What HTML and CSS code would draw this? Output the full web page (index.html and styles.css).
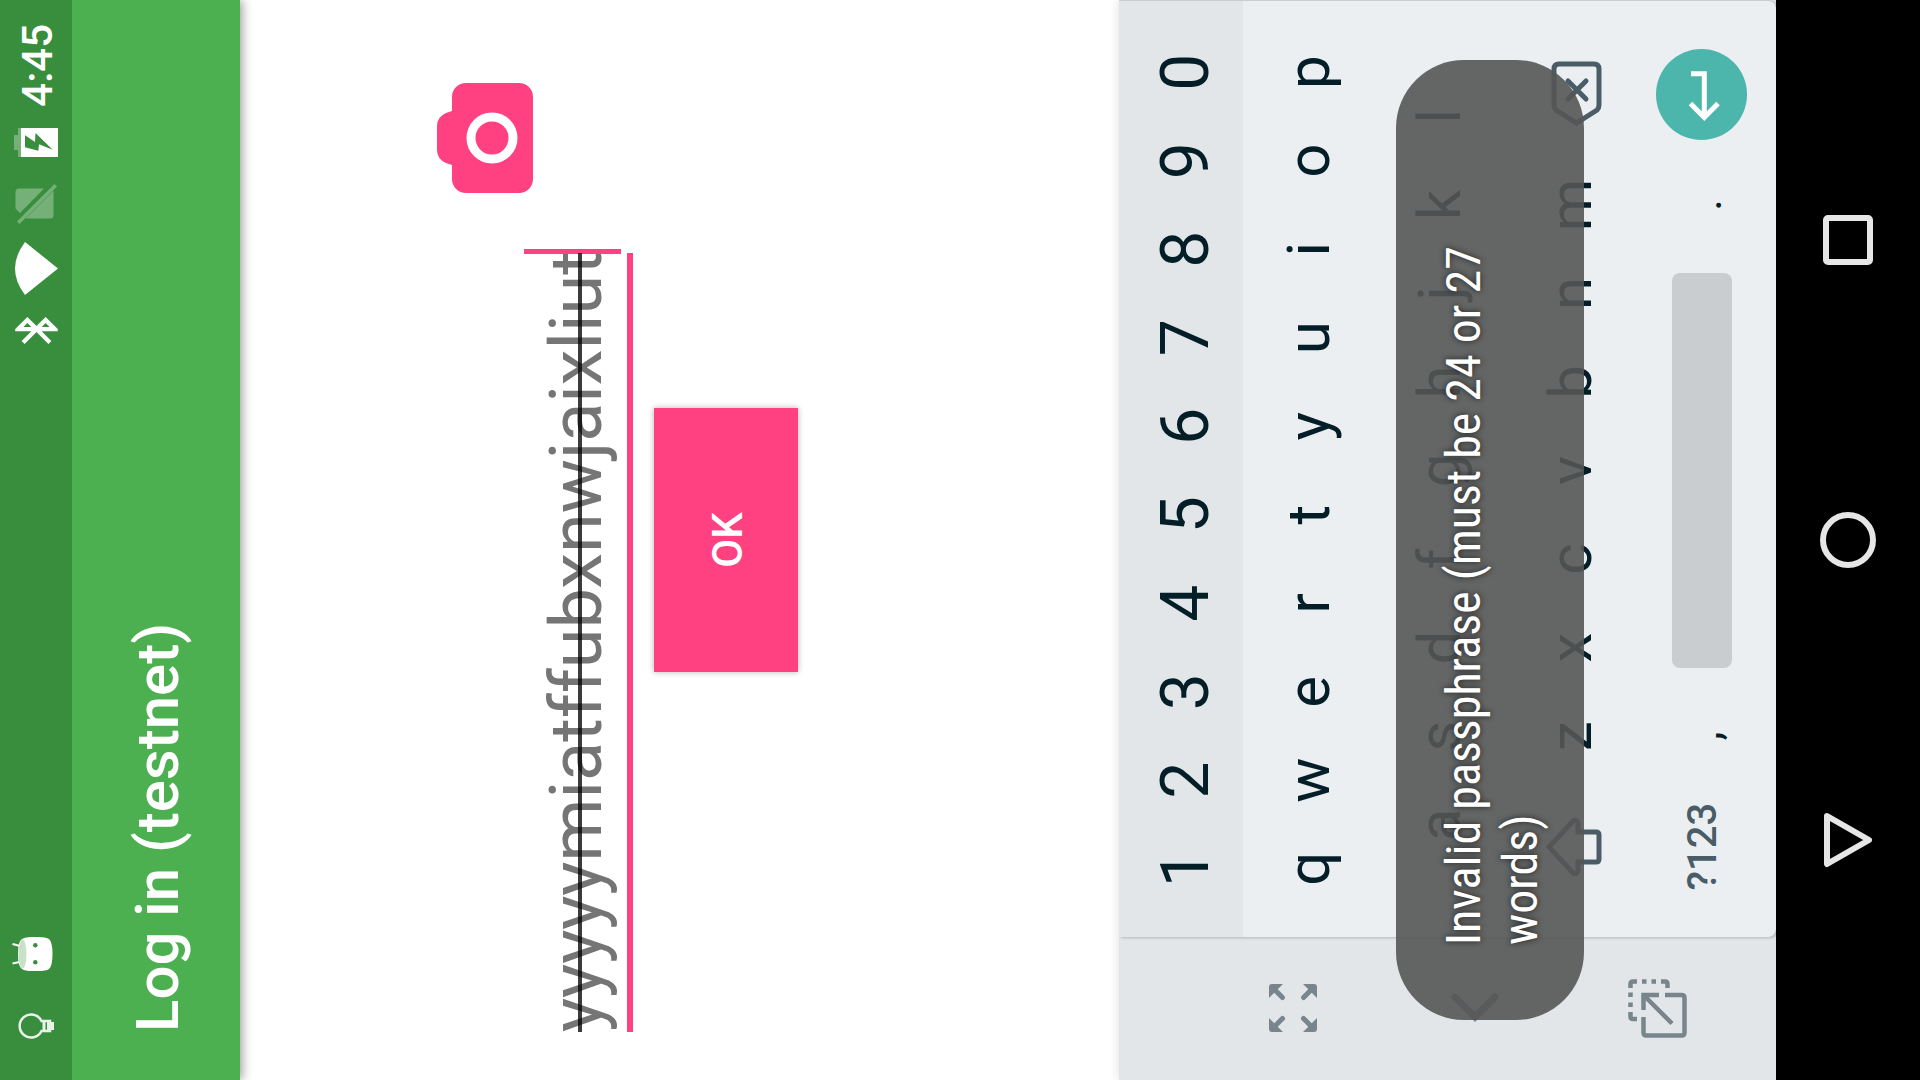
FILE: index.html
```html
<!DOCTYPE html>
<html lang="en">
<head>
<meta charset="utf-8">
<title>Log in (testnet)</title>
<link rel="stylesheet" href="styles.css">
</head>
<body>
<div class="device">
  <header class="status">
    <div class="status-group">
      <svg class="bulb" width="26" height="37" viewBox="0 0 26 37"><path d="M8 24.500A11.500 11.500 0 1 1 18 24.500V33H8Z" fill="none" stroke="#e9f3ea" stroke-width="2.500"/><path d="M7 27h12M7 31.500h12M9 35.500h8" stroke="#e9f3ea" stroke-width="3"/></svg>
      <svg class="droid" width="34" height="41" viewBox="0 0 34 41"><path d="M7.500 0.500 9.500 10M27 0.500 24.500 10" stroke="#fff" stroke-width="2.200"/><path d="M0 20Q0 13 2 10Q4 6 17 6T32 10Q34 13 34 20V26Q34 34 32 37Q29 40.500 17 40.500T2 37Q0 34 0 26Z" fill="#fff"/><ellipse cx="17" cy="10.500" rx="14.500" ry="4" fill="#c9e0ca"/><circle cx="8.700" cy="23.300" r="2.200" fill="#388e3c"/><circle cx="25.700" cy="23.300" r="2.200" fill="#388e3c"/></svg>
    </div>
    <div class="status-group">
      <svg class="bluetooth" width="27" height="43" viewBox="5 2 12.700 20"><path fill="#fff" d="M17.710 7.710L12 2h-1v7.590L6.410 5 5 6.410 10.590 12 5 17.590 6.410 19 11 14.410V22h1l5.710-5.710-4.300-4.290 4.300-4.290zM13 5.830l1.880 1.880L13 9.590V5.830zm1.880 10.460L13 18.170v-3.760l1.880 1.880z"/></svg>
      <svg class="wifi" width="53" height="43" viewBox="0 0 53 43"><path fill="#fff" d="M0 10Q26.500-10 53 10L26.500 43Z"/></svg>
      <svg class="sim" width="40" height="42" viewBox="0 0 40 42"><g fill="#76b079"><path d="M35.500 29V4Q35.500 0.500 32 0.500H15.500L11 5ZM33.500 38.500H9Q5.500 38.500 5.500 35V10.500Z"/><path d="M2.500 2 40 39.500 37.500 42 0 4.500Z"/></g></svg>
      <svg class="battery" width="29" height="44" viewBox="0 0 29 44"><path fill="#76b079" d="M7 0h15v4h7v4H0V4h7z"/><path fill="#fff" fill-rule="evenodd" d="M0 7h29v37H0ZM21.700 11 15 21 24 21.500 7.300 38.700 12.700 25 6.300 24.300 9.700 11Z"/></svg>
      <time class="clock">4:45</time>
    </div>
  </header>

  <div class="appbar"><h1>Log in (testnet)</h1></div>

  <main class="content">
    <div class="entry">
      <div class="field">
        <input type="text" aria-label="Passphrase" value="yyyyymiatffubxnwjaixliut">
        <span class="caret"></span>
      </div>
      <button class="camera" aria-label="Scan code">
        <svg width="110" height="96" viewBox="0 0 110 96"><path fill="#ff4081" d="M14 15H28L30 9Q34 0 43 0H67Q76 0 80 9L82 15H96A14 14 0 0 1 110 29V82A14 14 0 0 1 96 96H14A14 14 0 0 1 0 82V29A14 14 0 0 1 14 15Z"/><circle cx="55" cy="55" r="21" fill="none" stroke="#fff" stroke-width="9"/></svg>
      </button>
    </div>
    <button class="ok">OK</button>
  </main>

  <section class="keyboard">
    <aside class="side">
      <button aria-label="Expand keyboard"><svg width="48" height="48" viewBox="0 0 48 48"><g id="corner"><path d="M0 14V3Q0 0 3 0H14Z" fill="#78858c"/><path d="M5 5 13.500 13.500" stroke="#78858c" stroke-width="5" stroke-linecap="round"/></g><use href="#corner" transform="rotate(90 24 24)"/><use href="#corner" transform="rotate(180 24 24)"/><use href="#corner" transform="rotate(270 24 24)"/></svg></button>
      <button aria-label="Move keyboard left"><svg width="30" height="48" viewBox="0 0 30 48"><path d="M26 4 6 24 26 44" fill="none" stroke="#78858c" stroke-width="7" stroke-linecap="round"/></svg></button>
      <button aria-label="Float keyboard"><svg width="59" height="59" viewBox="0 0 59 59"><g fill="none" stroke="#78858c" stroke-width="4.500"><path d="M43 37V53.500Q43 56.500 40 56.500H5.500Q2.500 56.500 2.500 53.500V18.500Q2.500 15.500 5.500 15.500H21M28 15.500H43V31M43 15.500 14.500 44"/><path d="M19 9V5Q19 2.500 21.500 2.500H26M31 2.500h4.500M41 2.500h4.500M50 2.500H54Q56.500 2.500 56.500 5V9M56.500 14v4.500M56.500 23.500V28M56.500 33V37Q56.500 39.500 54 39.500H50"/></g></svg></button>
    </aside>
    <div class="keys">
      <div class="row digits"><button>1</button><button>2</button><button>3</button><button>4</button><button>5</button><button>6</button><button>7</button><button>8</button><button>9</button><button>0</button></div>
      <div class="row"><button>q</button><button>w</button><button>e</button><button>r</button><button>t</button><button>y</button><button>u</button><button>i</button><button>o</button><button>p</button></div>
      <div class="row inset"><button>a</button><button>s</button><button>d</button><button>f</button><button>g</button><button>h</button><button>j</button><button>k</button><button>l</button></div>
      <div class="row">
        <button class="wide" aria-label="Shift"><svg width="60" height="64" viewBox="0 0 60 64"><path d="M30 10 56 34Q58 38 54 39H45V57Q45 60 42 60H18Q15 60 15 57V39H6Q2 38 4 34Z" fill="none" stroke="#4a5d67" stroke-width="5"/></svg></button>
        <button>z</button><button>x</button><button>c</button><button>v</button><button>b</button><button>n</button><button>m</button>
        <button class="wide" aria-label="Delete"><svg width="66" height="64" viewBox="0 0 66 64"><path d="M22 15H58Q63 15 63 20V55Q63 60 58 60H22Q19 60 17 58L4 37.500 17 17Q19 15 22 15ZM28 29 46 47M46 29 28 47" fill="none" stroke="#4a5d67" stroke-width="5" stroke-linecap="round"/></svg></button>
      </div>
      <div class="row">
        <button class="wide symbols">?123</button>
        <button class="mark">,</button>
        <button class="space" aria-label="Space"><span></span></button>
        <button class="mark">.</button>
        <button class="wide" aria-label="Enter"><svg width="91" height="91" viewBox="0 0 91 91"><circle cx="45.500" cy="45.500" r="45.500" fill="#4db6ac"/><path d="M66.300 35V48.300H22M36.500 34.500 22.500 48.300 36.500 62" fill="none" stroke="#fff" stroke-width="5"/></svg></button>
      </div>
    </div>
  </section>

  <nav class="navbar">
    <button aria-label="Back"><svg width="56" height="56" viewBox="0 0 56 56"><path d="M4 7H52L28 49Z" fill="none" stroke="#e6e6e6" stroke-width="6" stroke-linejoin="round"/></svg></button>
    <button aria-label="Home"><svg width="56" height="56" viewBox="0 0 56 56"><circle cx="28" cy="28" r="25" fill="none" stroke="#e6e6e6" stroke-width="6"/></svg></button>
    <button aria-label="Recents"><svg width="56" height="56" viewBox="0 0 56 56"><rect x="6" y="6" width="44" height="44" rx="2" fill="none" stroke="#e6e6e6" stroke-width="6"/></svg></button>
  </nav>

  <div class="toast" role="alert">Invalid passphrase (must be 24 or 27 words)</div>
</div>
</body>
</html>
```
FILE: styles.css
```css
* { box-sizing: border-box; }

html { overflow: hidden; }

body {
  margin: 0;
  height: 100vh;
  overflow: hidden;
  background: #fff;
  font-family: Roboto, "Noto Sans", sans-serif;
}

button {
  display: flex;
  align-items: center;
  justify-content: center;
  margin: 0;
  padding: 0;
  border: 0;
  background: none;
  color: inherit;
  font: inherit;
}

svg { display: block; }

/* Portrait device lying on its side */
.device {
  position: relative;
  display: flex;
  flex-direction: column;
  width: 100vh;
  height: 100vw;
  margin-bottom: calc(100vh - 100vw);
  background: #fff;
  transform: rotate(-90deg) translateX(-100%);
  transform-origin: top left;
}

.status {
  position: relative;
  z-index: 2;
  display: flex;
  flex: none;
  justify-content: space-between;
  height: 72px;
  padding: 0 24px 0 41px;
  background: #388e3c;
  color: #fff;
}

.status-group { display: flex; align-items: center; }
.bulb { margin-bottom: 2px; }
.droid { margin: 0 0 7px 42px; }
.wifi { margin: 0 18px 0 22px; }
.battery { margin: 0 21px 0 27px; }
.clock { padding-top: 4px; font-size: 42px; font-weight: 500; line-height: 48px; }

.appbar {
  z-index: 1;
  display: flex;
  flex: none;
  align-items: center;
  height: 168px;
  padding: 2px 48px 0;
  background: #4caf50;
  box-shadow: 0 2px 10px rgba(0, 0, 0, .4);
  color: #fff;
}

h1 { margin: 0; font-size: 60px; font-weight: 500; }

.content { flex: 1; padding: 197px 48px 0; }

.entry { display: flex; align-items: flex-end; }

.field {
  position: relative;
  flex: 1;
  border-bottom: 6px solid #ff4081;
}

.field::after {
  content: "";
  position: absolute;
  top: 54px;
  right: 0;
  left: 0;
  height: 4px;
  background: rgba(0, 0, 0, .77);
}

.field input {
  display: block;
  width: 100%;
  height: 103px;
  padding: 2px 0 0;
  border: 0;
  outline: 0;
  background: none;
  color: #757575;
  font: 400 72px Roboto, "Noto Sans", sans-serif;
}

.caret {
  position: absolute;
  top: 0;
  right: -4px;
  width: 5px;
  height: 97px;
  background: #ff4081;
}

.camera { margin: 0 35px 100px 60px; }

.ok {
  width: 264px;
  height: 144px;
  margin: 21px auto 0;
  padding-top: 2px;
  background: #ff4081;
  box-shadow: 0 0 6px rgba(0, 0, 0, .3);
  color: #fff;
  font-size: 42px;
  font-weight: 500;
}

.keyboard {
  display: flex;
  flex: none;
  background: #e2e6e9;
  box-shadow: 0 0 10px rgba(60, 30, 10, .15);
}

.side {
  display: flex;
  flex: none;
  flex-direction: column;
  width: 143px;
  padding: 83px 0 27px;
}

.side button { flex: 1; }

.keys {
  flex: 1;
  padding-bottom: 9px;
  border-right: 1px solid #c9cdd0;
  border-bottom-left-radius: 8px;
  border-bottom-right-radius: 8px;
  background: #ebeff2;
  box-shadow: -1px 2px 3px rgba(0, 0, 0, .2);
  color: #041e28;
  font-size: 60px;
}

.row { display: flex; height: 131px; padding: 0 27px 0 24px; }
.row button { flex: 2 1 0; }
.row .wide { flex-grow: 3; }
.digits { height: 124px; padding-top: 8px; background: #e2e6e9; font-size: 66px; }
.inset { padding: 0 71px 0 68px; }
.row .symbols { padding-top: 2px; color: #4a5d67; font-size: 40px; font-weight: 500; }
.row .mark { padding-top: 8px; font-size: 44px; }
.row .space { flex-grow: 10; }

.space span {
  width: 100%;
  height: 60px;
  margin: 0 24px;
  border-radius: 8px;
  background: #c9cdd0;
}

.navbar {
  z-index: 1;
  display: flex;
  flex: none;
  justify-content: center;
  height: 144px;
  background: #000;
}

.navbar button { width: 300px; }

.toast {
  position: absolute;
  right: 60px;
  bottom: 336px;
  left: 60px;
  padding: 39px 60px 35px 75px;
  border-radius: 68px;
  background: rgba(85, 85, 85, .9);
  color: #fff;
  font-family: "Roboto Condensed", "Liberation Sans Narrow", Roboto, sans-serif;
  font-size: 48px;
  line-height: 57px;
  text-shadow: 0 0 6px rgba(0, 0, 0, .7);
}
```
